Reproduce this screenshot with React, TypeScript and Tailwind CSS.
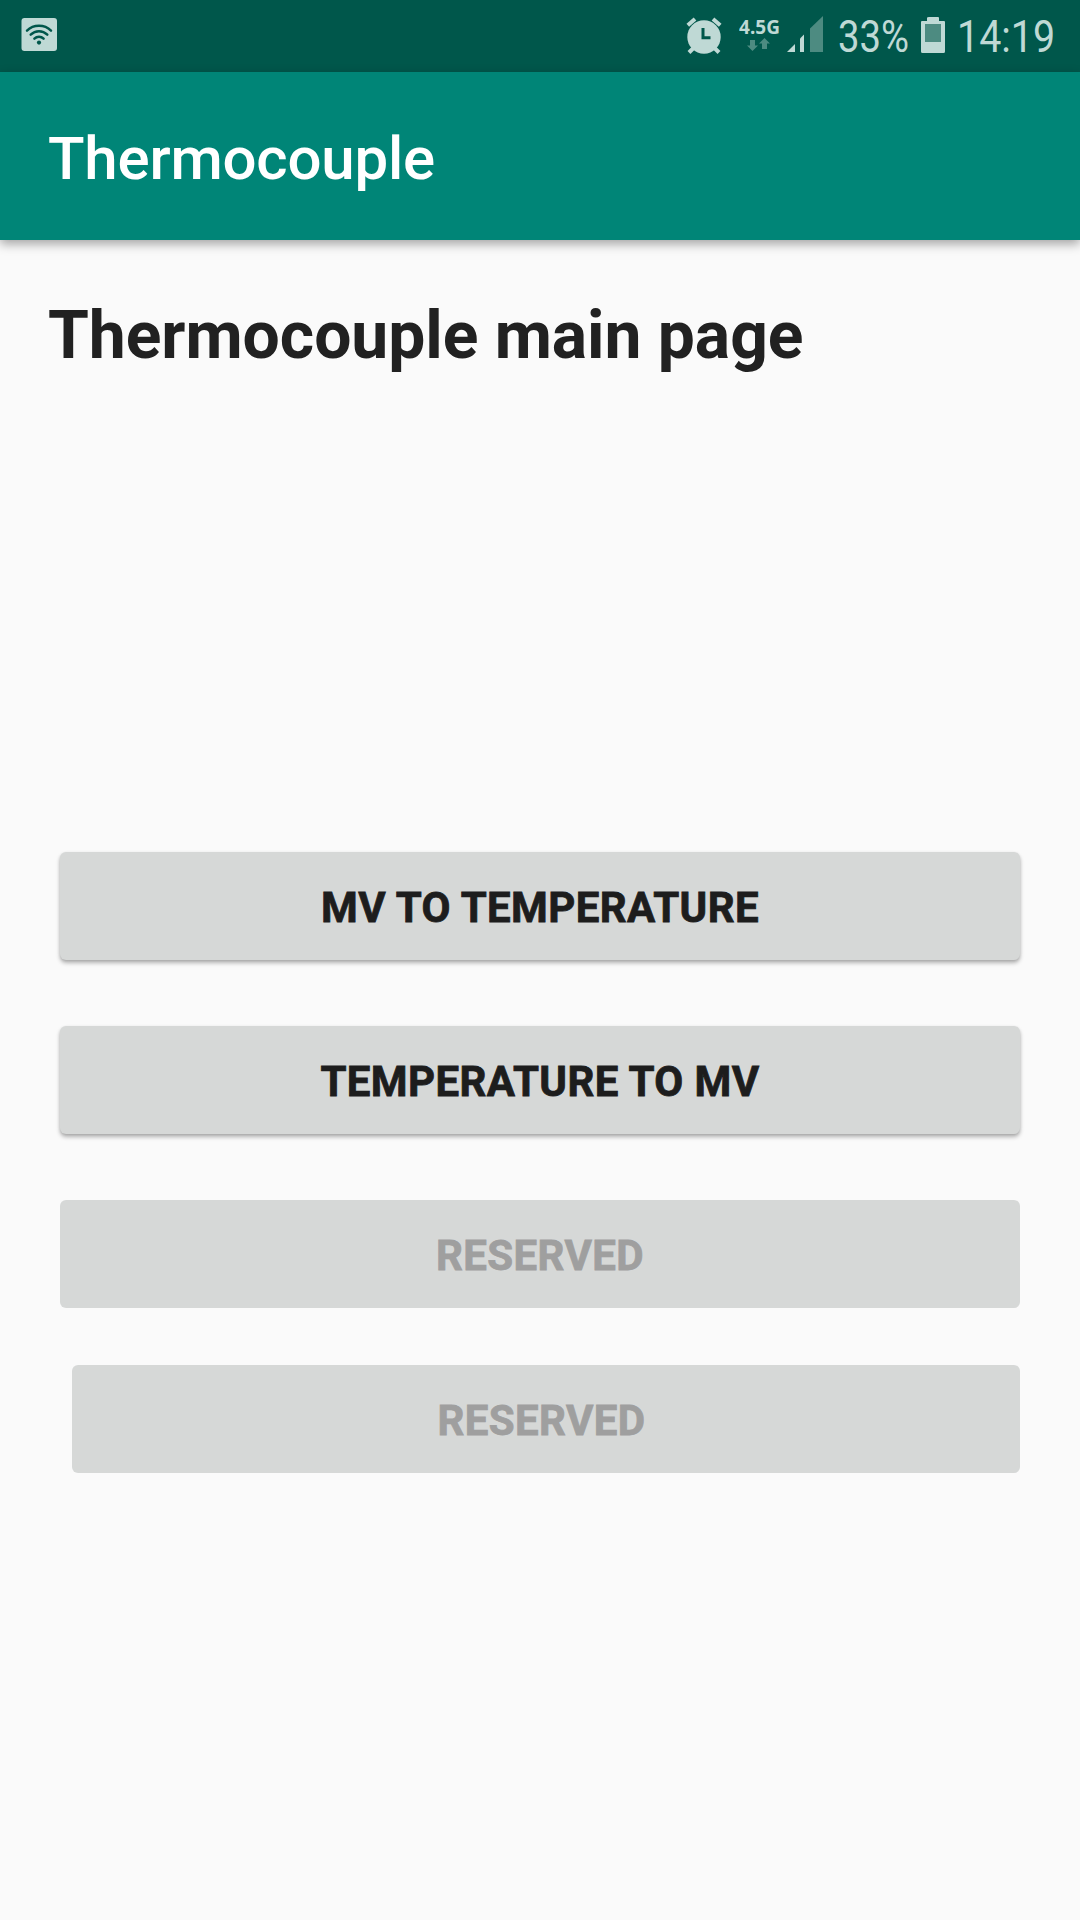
import React from 'react';
import { clsx } from 'clsx';

const WifiIcon = () => (
  <svg width="36" height="33" viewBox="0 0 36 33" fill="none">
    <rect x="0.5" width="35.5" height="33" rx="3" fill="#bfd9d5" />
    <g stroke="#00574b" strokeWidth="2.5" strokeLinecap="round">
      <path d="M6 12.6C12.5 6.2 23.5 6.2 30 12.6" />
      <path d="M9.7 16.6C14.4 12 21.6 12 26.3 16.6" />
      <path d="M13.4 20.6C16 18 20 18 22.6 20.6" />
    </g>
    <circle cx="18" cy="24.6" r="2.1" fill="#00574b" />
  </svg>
);

const AlarmIcon = () => (
  <svg width="36" height="37" viewBox="0 0 36 37" fill="none">
    <circle cx="18" cy="20" r="16.7" fill="#bfd9d5" />
    <g stroke="#bfd9d5" strokeWidth="4">
      <path d="M1.8 8.2L9 2" />
      <path d="M34.2 8.2L27 2" />
      <path d="M7.5 31L3 35.5" />
      <path d="M28.5 31L33 35.5" />
    </g>
    <path d="M17 11V20.7H24.5" stroke="#00574b" strokeWidth="3" />
  </svg>
);

const DataArrows = () => (
  <svg width="24" height="14" viewBox="0 0 24 14" fill="#4d8b81">
    <path d="M3 2H8V7.5H11L5.5 13L0 7.5H3Z" />
    <path d="M15 11H20V5.5H23L17.5 0L12 5.5H15Z" />
  </svg>
);

const SignalIcon = () => (
  <svg width="36" height="36" viewBox="0 0 36 36">
    <path d="M0 36L8 28V36Z" fill="#bfd9d5" />
    <path d="M13 36V22.5L17 18.5V36Z" fill="#bfd9d5" />
    <path d="M23 36V12.5L36 0V36Z" fill="#4d8b81" />
  </svg>
);

const BatteryIcon = () => (
  <svg width="24" height="36" viewBox="0 0 24 36">
    <path
      d="M8 0H17Q18 0 18 1V4H23Q24 4 24 5V34.5Q24 36 22.5 36H1.5Q0 36 0 34.5V5Q0 4 1 4H6V1Q6 0 8 0Z"
      fill="#bfd9d5"
    />
    <rect x="4" y="7" width="16" height="18" fill="#4d8b81" />
  </svg>
);

const StatusBar = () => (
  <div className="flex h-[72px] items-start bg-[#00574b] pl-[21px] text-[#bfd9d5]">
    <div className="mt-[18px] mr-auto">
      <WifiIcon />
    </div>
    <div className="mt-[17px] mr-[17px]">
      <AlarmIcon />
    </div>
    <div className="mt-[16px] mr-[8px] flex w-[40px] flex-col items-center">
      <span className="origin-center scale-x-[0.95] font-['Noto_Sans',sans-serif] text-[20px] leading-[22px] font-bold">
        4.5G
      </span>
      <DataArrows />
    </div>
    <div className="mt-[16px] mr-[15px]">
      <SignalIcon />
    </div>
    {/* Scaled on x to get condensed digits */}
    <div className="mt-[10px] w-[83px]">
      <span className="inline-block origin-left scale-x-[0.85] text-[45px] leading-[54px]">33%</span>
    </div>
    <div className="mt-[17px] mr-[12px]">
      <BatteryIcon />
    </div>
    <div className="mt-[10px] w-[123px]">
      <span className="inline-block origin-left scale-x-[0.875] text-[45px] leading-[54px]">14:19</span>
    </div>
  </div>
);

type MenuButtonProps = {
  label: string;
  disabled?: boolean;
  className?: string;
};

const MenuButton = ({ label, disabled, className }: MenuButtonProps) => (
  <button
    disabled={disabled}
    className={clsx(
      'flex h-[108px] items-center justify-center rounded-[6px] bg-[#d6d8d7] pt-[2px] text-[42px] font-bold tracking-[0.4px] uppercase [-webkit-text-stroke-width:0.8px]',
      disabled
        ? 'text-[#9f9f9f]'
        : 'text-[#1d1d1d] shadow-[0_3px_4px_rgba(0,0,0,0.28),0_1px_3px_rgba(0,0,0,0.1)]',
      className
    )}
  >
    {label}
  </button>
);

const App = () => {
  return (
    <div className="flex h-[1920px] w-[1080px] flex-col overflow-hidden bg-[#fafafa] font-['Roboto',sans-serif]">
      <StatusBar />

      {/* App bar */}
      <header className="flex h-[168px] items-center bg-[#008577] px-12 pt-[5px] shadow-[0_4px_10px_rgba(0,0,0,0.35)]">
        <h1 className="text-[60px] leading-[70px] font-medium tracking-[-0.2px] text-white">
          Thermocouple
        </h1>
      </header>

      <main className="flex flex-col px-[60px] pt-[57px]">
        <h2 className="-ml-3 text-[66px] leading-[78px] font-bold tracking-[-0.05px] text-[#212121]">
          Thermocouple main page
        </h2>

        <div className="mt-[477px] flex flex-col">
          <MenuButton label="mV to Temperature" />
          <MenuButton label="Temperature to mV" className="mt-[66px]" />
          <MenuButton label="Reserved" disabled className="mt-[66px]" />
          <MenuButton label="Reserved" disabled className="mt-[57px] ml-3 pr-[9px]" />
        </div>
      </main>
    </div>
  );
};

export default App;
